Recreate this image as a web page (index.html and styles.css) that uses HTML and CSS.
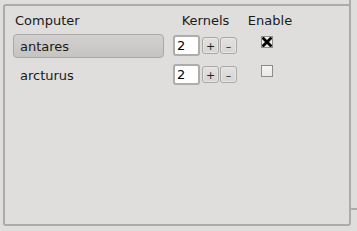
FILE: index.html
```html
<!DOCTYPE html>
<html>
<head>
<meta charset="utf-8">
<link rel="stylesheet" href="styles.css">
</head>
<body>
<div class="window">
  <div class="back-panel"></div>
  <div class="panel">
    <div class="table">
      <div class="hdr hdr-comp">Computer</div>
      <div class="hdr hdr-kern">Kernels</div>
      <div class="hdr hdr-en">Enable</div>

      <div class="host selected">antares</div>
      <div class="spin">
        <div class="spin-input">2</div>
        <div class="spin-btn">+</div>
        <div class="spin-btn">–</div>
      </div>
      <div class="check checked">
        <svg width="10" height="10" viewBox="0 0 10 10"><path d="M1.5 1.5 L8.5 8.5 M8.5 1.5 L1.5 8.5" stroke="#000" stroke-width="2.8" stroke-linecap="square"/></svg>
      </div>

      <div class="host">arcturus</div>
      <div class="spin">
        <div class="spin-input">2</div>
        <div class="spin-btn">+</div>
        <div class="spin-btn">–</div>
      </div>
      <div class="check"></div>
    </div>
  </div>
</div>
</body>
</html>
```
FILE: styles.css
```css
html, body {
  margin: 0;
  padding: 0;
  background: #dfdedc;
}
body {
  font-family: "DejaVu Sans", sans-serif;
  font-size: 13px;
  color: #1a1a1a;
}
.window {
  position: relative;
  width: 357px;
  height: 231px;
  overflow: hidden;
  padding: 4px 0 0 3px;
  box-sizing: border-box;
}
.back-panel {
  position: absolute;
  left: 349px;
  top: -10px;
  width: 30px;
  height: 220px;
  border: 2px solid #acaba9;
  border-radius: 3px;
  box-sizing: border-box;
}
.panel {
  position: relative;
  width: 348px;
  height: 222px;
  border: 2px solid #acaba9;
  border-radius: 3px;
  box-sizing: border-box;
  background: #dfdedc;
  padding: 7px 0 0 8px;
}
.table {
  display: grid;
  grid-template-columns: 151px 64px 52px;
  grid-template-rows: 16px 25px 25px;
  column-gap: 9px;
  row-gap: 4px;
  align-items: center;
}
.hdr {
  line-height: 16px;
  white-space: nowrap;
}
.hdr-comp { padding-left: 2px; }
.hdr-kern { text-align: center; padding-left: 1px; }
.hdr-en { text-align: center; margin-left: -4px; }
.host {
  height: 24px;
  line-height: 24px;
  padding-left: 6px;
  box-sizing: border-box;
  border-radius: 4px;
  border: 1px solid transparent;
}
.host.selected {
  border-color: #a9a8a6;
  background: linear-gradient(#d2d1cf, #c5c4c2);
}
.spin {
  display: flex;
  align-items: center;
  height: 25px;
}
.spin-input {
  width: 27px;
  height: 21px;
  box-sizing: border-box;
  border: 2px solid #aeadab;
  border-radius: 3px;
  background: #fff;
  line-height: 17px;
  padding-left: 2px;
  color: #000;
}
.spin-btn {
  width: 17px;
  height: 17px;
  box-sizing: border-box;
  border: 1px solid #a9a8a6;
  border-radius: 3px;
  background: linear-gradient(#e3e2e0, #d5d4d2);
  box-shadow: inset 0 0 0 1px #e8e7e5;
  font-size: 11px;
  line-height: 17px;
  text-align: center;
  color: #222;
}
.spin-input + .spin-btn { margin-left: 2px; }
.spin-btn + .spin-btn { margin-left: 1px; }
.check {
  align-self: start;
  justify-self: start;
  margin-top: 3px;
  margin-left: 15px;
  width: 12px;
  height: 12px;
  box-sizing: border-box;
  border: 1px solid #8d8c8a;
  background: linear-gradient(#f4f4f3, #e8e8e7);
  display: flex;
  align-items: center;
  justify-content: center;
}
.check svg { display: block; }
```
